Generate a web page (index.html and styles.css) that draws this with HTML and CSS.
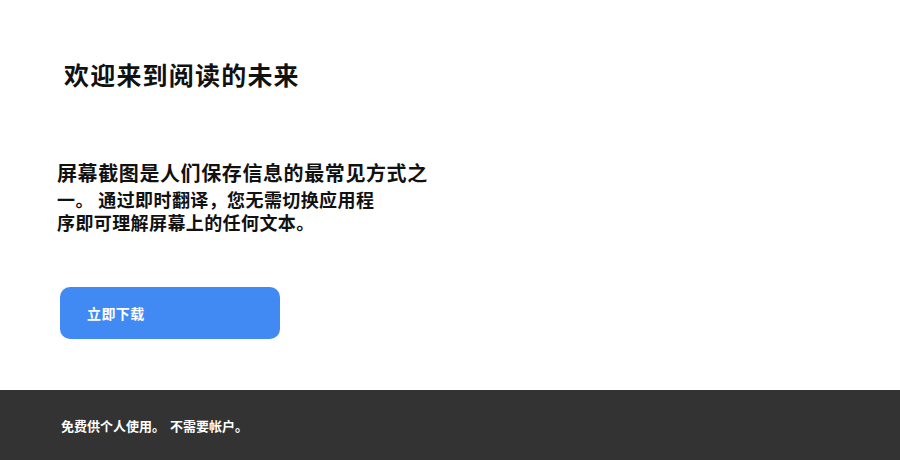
FILE: index.html
```html
<!DOCTYPE html>
<html lang="zh-CN">
<head>
<meta charset="utf-8">
<title>欢迎来到阅读的未来</title>
<link rel="stylesheet" href="styles.css">
</head>
<body>
<main class="hero">
  <h1 class="title">欢迎来到阅读的未来</h1>
  <div class="intro">
    <p class="lead">屏幕截图是人们保存信息的最常见方式之</p>
    <p class="rest">一。 通过即时翻译，您无需切换应用程<br>序即可理解屏幕上的任何文本。</p>
  </div>
  <a class="cta" href="#">立即下载</a>
</main>
<footer class="footer">
  <p class="note">免费供个人使用。 不需要帐户。</p>
</footer>
</body>
</html>
```

FILE: styles.css
```css
html, body {
  margin: 0;
  padding: 0;
}
body {
  width: 900px;
  height: 460px;
  background: #ffffff;
  font-family: "Noto Sans CJK SC", "Noto Sans", sans-serif;
  color: #111111;
  display: flex;
  flex-direction: column;
  overflow: hidden;
}
.hero {
  height: 390px;
  display: flex;
  flex-direction: column;
  align-items: flex-start;
}
.title {
  margin: 57px 0 0 64px;
  font-size: 25px;
  line-height: 34px;
  font-weight: 600;
  letter-spacing: 1.2px;
}
.intro {
  margin: 70px 0 0 57px;
}
.lead {
  margin: 0 0 3px 0;
  font-size: 20px;
  line-height: 24px;
  font-weight: 700;
  letter-spacing: 0.6px;
}
.rest {
  margin: 0;
  font-size: 18px;
  line-height: 23px;
  font-weight: 600;
  letter-spacing: 0.4px;
}
.cta {
  margin: 53px 0 0 60px;
  width: 220px;
  height: 52px;
  box-sizing: border-box;
  padding-left: 27px;
  display: flex;
  align-items: center;
  background: #418af4;
  border-radius: 10px;
  color: #ffffff;
  text-decoration: none;
  font-size: 14px;
  font-weight: 700;
  letter-spacing: 0.4px;
}
.footer {
  height: 70px;
  background: #333333;
  display: flex;
  align-items: center;
  padding-left: 61px;
}
.note {
  margin: 0;
  color: #ffffff;
  font-size: 13px;
  font-weight: 700;
  word-spacing: 2px;
}
```
